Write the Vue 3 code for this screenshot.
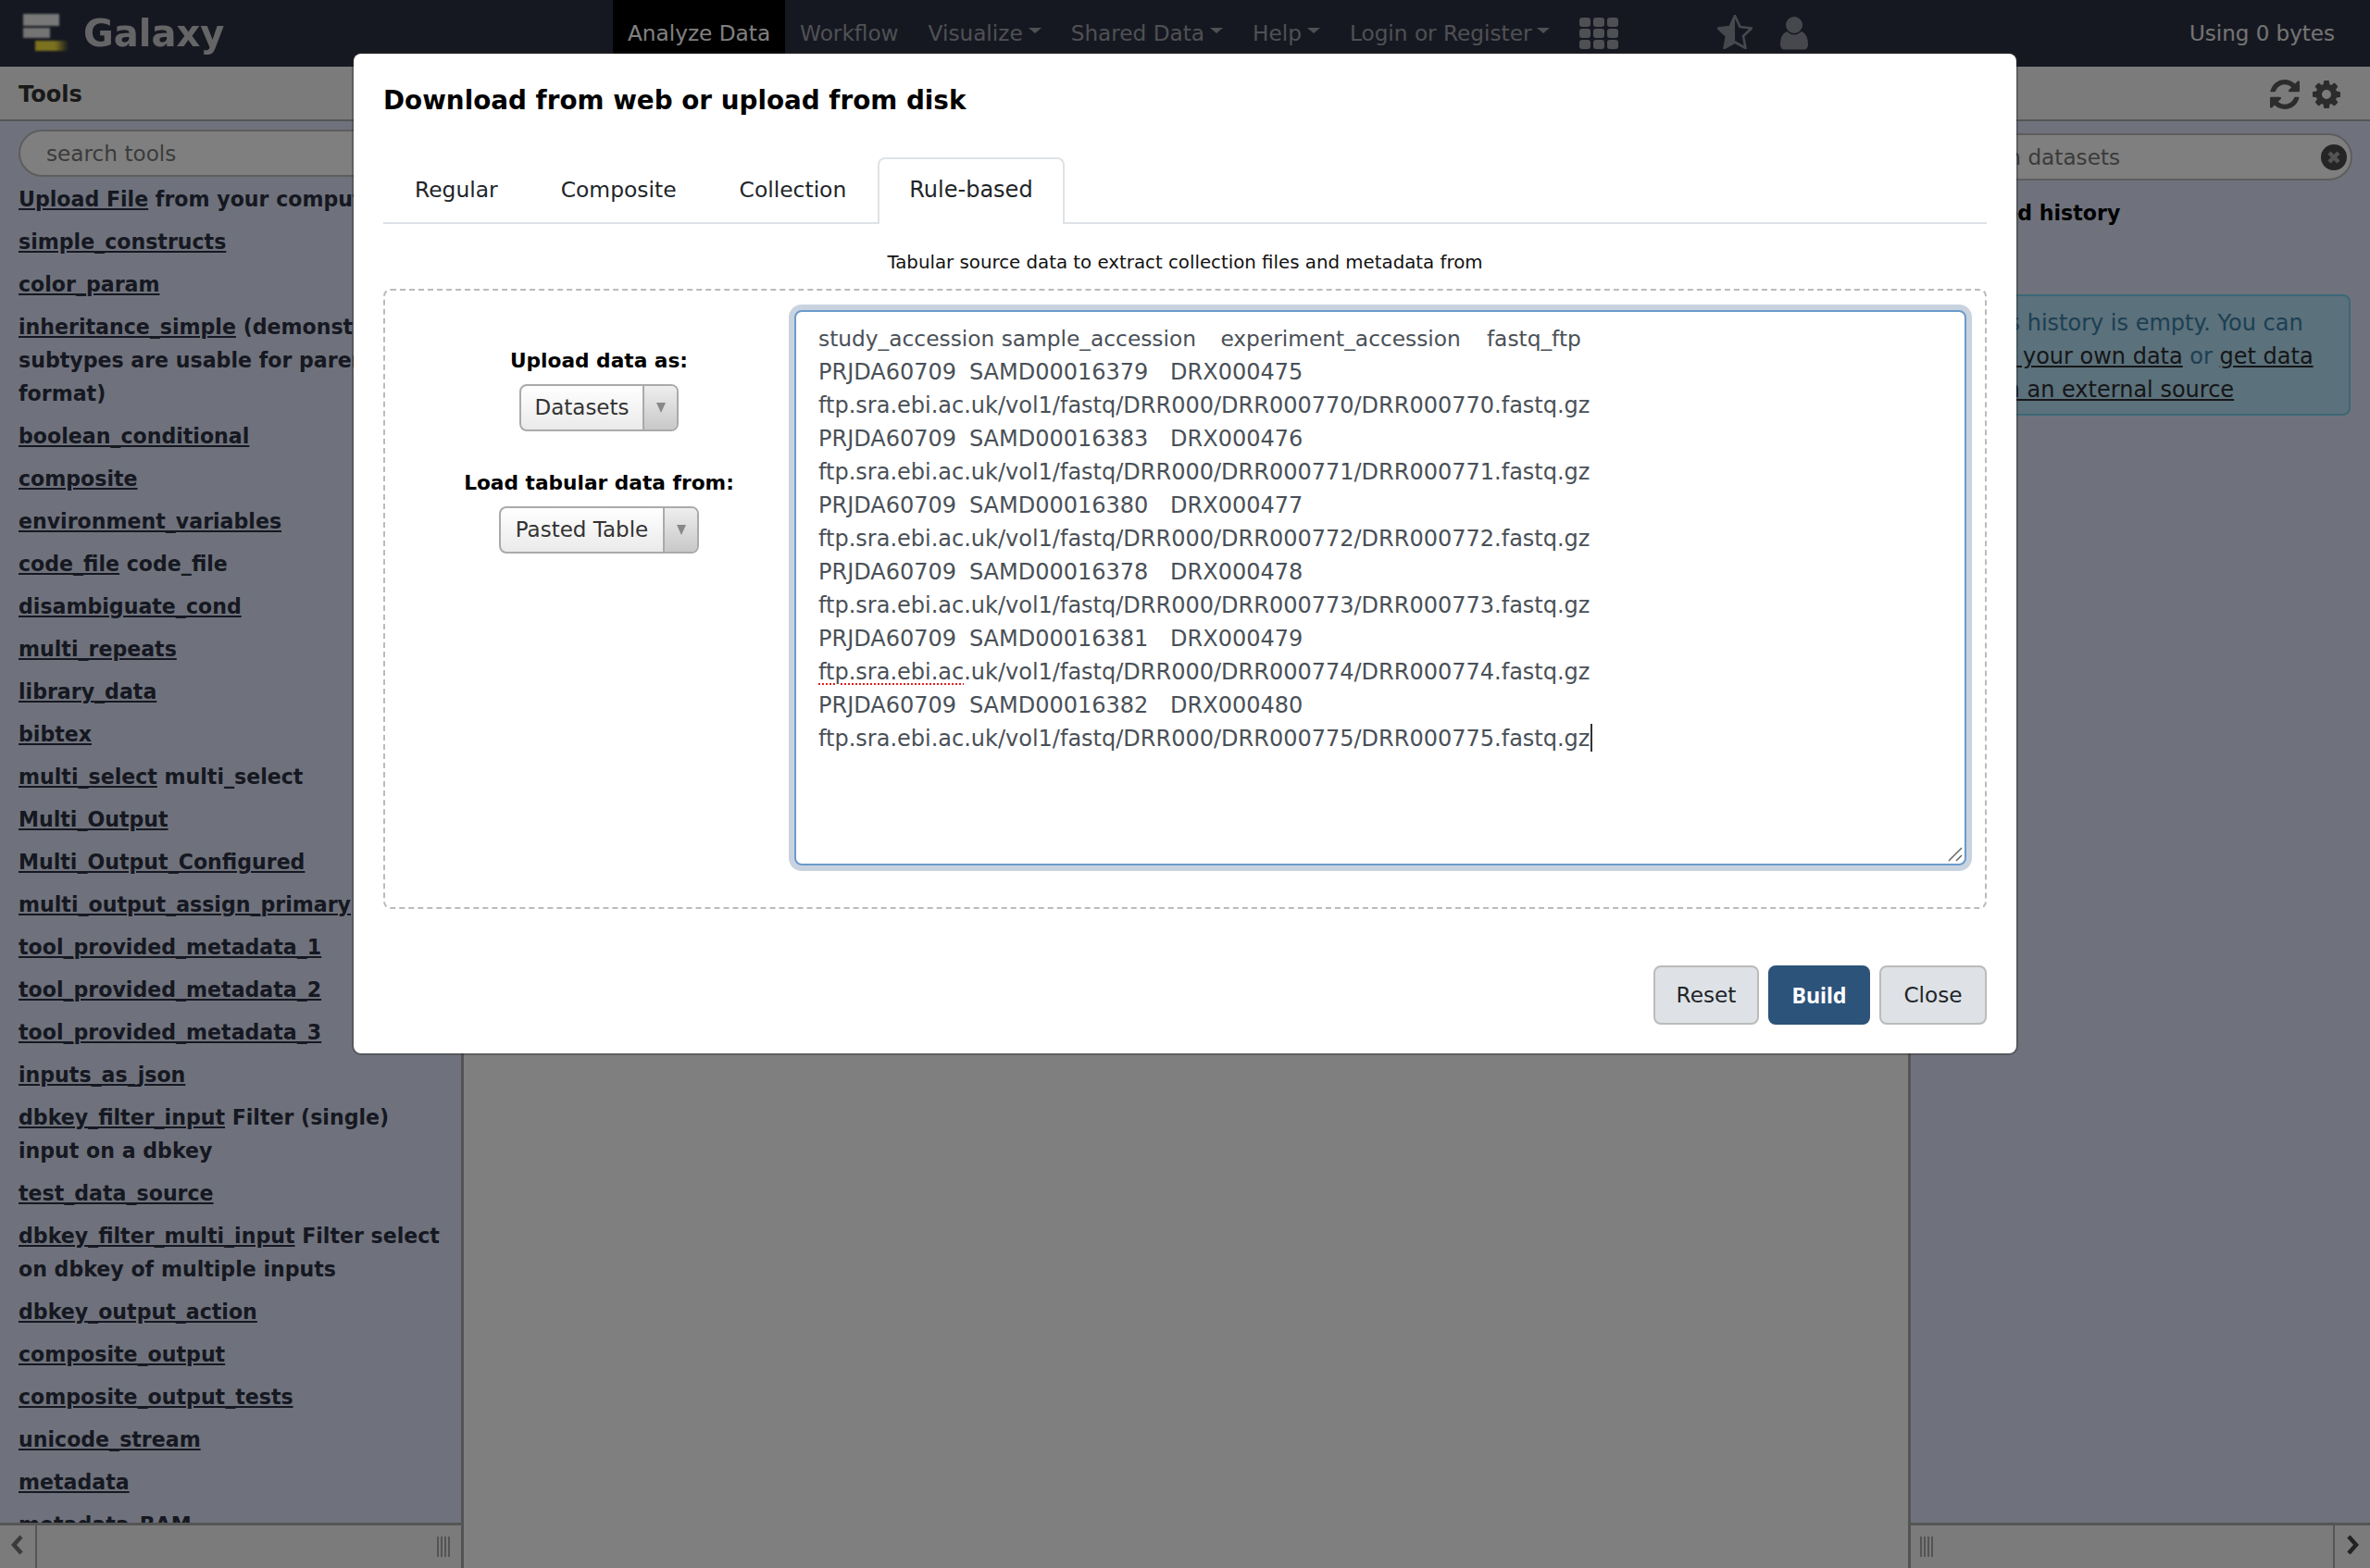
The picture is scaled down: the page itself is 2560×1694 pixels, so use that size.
<script setup>
const tools = [
  ['Upload File', ' from your computer'],
  ['simple_constructs', ''],
  ['color_param', ''],
  ['inheritance_simple', ' (demonstrate subtypes are usable for parent format)'],
  ['boolean_conditional', ''],
  ['composite', ''],
  ['environment_variables', ''],
  ['code_file', ' code_file'],
  ['disambiguate_cond', ''],
  ['multi_repeats', ''],
  ['library_data', ''],
  ['bibtex', ''],
  ['multi_select', ' multi_select'],
  ['Multi_Output', ''],
  ['Multi_Output_Configured', ''],
  ['multi_output_assign_primary', ''],
  ['tool_provided_metadata_1', ''],
  ['tool_provided_metadata_2', ''],
  ['tool_provided_metadata_3', ''],
  ['inputs_as_json', ''],
  ['dbkey_filter_input', ' Filter (single) input on a dbkey'],
  ['test_data_source', ''],
  ['dbkey_filter_multi_input', ' Filter select on dbkey of multiple inputs'],
  ['dbkey_output_action', ''],
  ['composite_output', ''],
  ['composite_output_tests', ''],
  ['unicode_stream', ''],
  ['metadata', ''],
  ['metadata_BAM', ''],
]

const rows = [
  ['PRJDA60709\tSAMD00016379\tDRX000475', '770'],
  ['PRJDA60709\tSAMD00016383\tDRX000476', '771'],
  ['PRJDA60709\tSAMD00016380\tDRX000477', '772'],
  ['PRJDA60709\tSAMD00016378\tDRX000478', '773'],
  ['PRJDA60709\tSAMD00016381\tDRX000479', '774'],
  ['PRJDA60709\tSAMD00016382\tDRX000480', '775'],
]
const header = 'study_accession sample_accession\texperiment_accession\t'
const navItems = [
  { label: 'Workflow', caret: false },
  { label: 'Visualize', caret: true },
  { label: 'Shared Data', caret: true },
  { label: 'Help', caret: true },
  { label: 'Login or Register', caret: true },
]
const tabs = ['Regular', 'Composite', 'Collection', 'Rule-based']
</script>

<template>
  <div class="page">
    <header class="navbar">
      <div class="brand">
        <div class="logo">
          <i class="b1"></i><i class="b2"></i><i class="b3"></i>
        </div>
        <span class="brand-text">Galaxy</span>
      </div>
      <nav class="nav">
        <a class="nav-item active">Analyze Data</a>
        <a v-for="n in navItems" :key="n.label" class="nav-item">
          {{ n.label }}<i v-if="n.caret" class="caret"></i>
        </a>
        <div class="grid-icon"><i v-for="k in 9" :key="k"></i></div>
        <svg class="star" viewBox="0 0 38 37" width="38" height="37">
          <path d="M19 1 L24.5 13 L37 14.5 L28 23 L30.5 36 L19 29.5 L7.5 36 L10 23 L1 14.5 L13.5 13 Z" fill="none" stroke="#8f919a" stroke-width="2.6" stroke-linejoin="round"/>
          <path d="M19 1 L13.5 13 L1 14.5 L10 23 L7.5 36 L19 29.5 Z" fill="#8f919a"/>
        </svg>
        <svg class="person" viewBox="0 0 30 36" width="30" height="36">
          <circle cx="15" cy="9" r="9" fill="#8f919a"/>
          <path d="M7 16 Q15 23 23 16 Q30 19 30 30 Q30 35.500 25 35.500 L5 35.500 Q0 35.500 0 30 Q0 19 7 16 Z" fill="#8f919a"/>
        </svg>
      </nav>
      <div class="quota">Using 0 bytes</div>
    </header>

    <div class="body">
      <aside class="side left">
        <div class="panel-head"><span class="panel-title">Tools</span></div>
        <div class="search tools-search">search tools</div>
        <div class="tool-list">
          <div v-for="t in tools" :key="t[0]" class="tool">
            <a>{{ t[0] }}</a>{{ t[1] }}
          </div>
        </div>
        <div class="panel-foot">
          <div class="chev-cell">
            <svg viewBox="0 0 14 24" width="14" height="24"><path d="M11 3 L3 12 L11 21" fill="none" stroke="#777" stroke-width="4.500"/></svg>
          </div>
          <div class="foot-space end"><span class="handle"></span></div>
        </div>
      </aside>

      <main class="center"></main>

      <aside class="side right">
        <div class="panel-head end">
          <svg class="hicon" viewBox="0 0 1536 1536" width="32" height="32"><path fill="#585858" d="M1511 928q0 5-1 7-64 268-268 434.5t-478 166.5q-146 0-282.5-55t-243.5-157l-129 129q-19 19-45 19t-45-19-19-45v-448q0-26 19-45t45-19h448q26 0 45 19t19 45-19 45l-137 137q71 66 161 102t187 36q134 0 250-65t186-179q11-17 53-117 8-23 30-23h192q13 0 22.5 9.500t9.500 22.500zm25-800v448q0 26-19 45t-45 19h-448q-26 0-45-19t-19-45 19-45l138-138q-148-137-349-137-134 0-250 65t-186 179q-11 17-53 117-8 23-30 23h-199q-13 0-22.500-9.500t-9.500-22.500v-7q65-268 270-434.500t480-166.500q146 0 284 55.500t245 156.500l130-129q19-19 45-19t45 19 19 45z"/></svg>
          <svg class="hicon" viewBox="0 0 1536 1536" width="30" height="30"><path fill="#585858" d="M1024 640q0-106-75-181t-181-75-181 75-75 181 75 181 181 75 181-75 75-181zm512-109v222q0 12-8 23t-20 13l-185 28q-19 54-39 91 35 50 107 138 10 12 10 25t-9 23q-27 37-99 108t-94 71q-12 0-26-9l-138-108q-44 23-91 38-16 136-29 186-7 28-36 28h-222q-14 0-24.500-8.500t-11.500-21.500l-28-184q-49-16-90-37l-141 107q-10 9-25 9-14 0-25-11-126-114-165-168-7-10-7-23 0-12 8-23 15-21 51-66.500t54-70.500q-27-50-41-99l-183-27q-13-2-21-12.500t-8-23.500v-222q0-12 8-23t19-13l186-28q14-46 39-92-40-57-107-138-10-12-10-24 0-10 9-23 26-36 98.500-107.500t94.500-71.500q13 0 26 10l138 107q44-23 91-38 16-136 29-186 7-28 36-28h222q14 0 24.500 8.500t11.500 21.500l28 184q49 16 90 37l142-107q9-9 24-9 13 0 25 10 129 119 165 170 7 8 7 22 0 12-8 23-15 21-51 66.500t-54 70.500q26 50 41 98l183 28q13 2 21 12.500t8 23.500z" transform="translate(0 128)"/></svg>
        </div>
        <div class="search hist-search">
          <span>search datasets</span>
          <svg viewBox="0 0 28 28" width="28" height="28"><circle cx="14" cy="14" r="14" fill="#4a4a4a"/><path d="M9 9 L19 19 M19 9 L9 19" stroke="#a8a8a8" stroke-width="4.500"/></svg>
        </div>
        <div class="hist-name">Unnamed history</div>
        <div class="message">
          <span class="msg-first">This history is empty. You can</span><br>
          <a>load your own data</a> or <a>get data</a><br>
          <a>from an external source</a>
        </div>
        <div class="spacer"></div>
        <div class="panel-foot">
          <div class="foot-space"><span class="handle"></span></div>
          <div class="chev-cell rightchev">
            <svg viewBox="0 0 14 24" width="14" height="24"><path d="M3 3 L11 12 L3 21" fill="none" stroke="#444" stroke-width="4.500"/></svg>
          </div>
        </div>
      </aside>
    </div>

    <div class="backdrop"></div>

    <section class="modal">
      <h4 class="modal-title">Download from web or upload from disk</h4>
      <div class="tabs">
        <a v-for="t in tabs" :key="t" class="tab" :class="{ on: t === 'Rule-based' }">{{ t }}</a>
      </div>
      <p class="hint">Tabular source data to extract collection files and metadata from</p>
      <div class="drop">
        <div class="opts">
          <label class="opt-label first">Upload data as:</label>
          <div class="select s1"><span class="sel-text">Datasets</span><span class="sel-arrow"><i></i></span></div>
          <label class="opt-label second">Load tabular data from:</label>
          <div class="select s2"><span class="sel-text">Pasted Table</span><span class="sel-arrow"><i></i></span></div>
        </div>
        <div class="area">
          <div class="line head">{{ header }}<span class="lastcol">fastq_ftp</span></div>
          <template v-for="r in rows" :key="r[1]">
            <div class="line">{{ r[0] }}</div>
            <div class="line"><span v-if="r[1] === '774'" class="spell">ftp.sra.ebi.ac</span><template v-else>ftp.sra.ebi.ac</template>.uk/vol1/fastq/DRR000/DRR000{{ r[1] }}/DRR000{{ r[1] }}.fastq.gz<i v-if="r[1] === '775'" class="cursor"></i></div>
          </template>
          <svg class="grip" viewBox="0 0 16 16" width="16" height="16"><path d="M1 15 L15 1 M9 15 L15 9" stroke="#666" stroke-width="1.500" fill="none"/></svg>
        </div>
      </div>
      <div class="actions">
        <button class="btn reset">Reset</button>
        <button class="btn primary">Build</button>
        <button class="btn close">Close</button>
      </div>
    </section>
  </div>
</template>

<style>
html, body { margin: 0; padding: 0; background: #fff; }
</style>

<style scoped>
.page {
  position: relative;
  width: 2560px;
  height: 1694px;
  overflow: hidden;
  display: flex;
  flex-direction: column;
  font-family: "DejaVu Sans", "Noto Sans", sans-serif;
  font-size: 24px;
  line-height: 36px;
  color: #2c3143;
}
.navbar {
  height: 72px;
  flex: none;
  background: #2c3143;
  display: flex;
  align-items: center;
  color: #fff;
}
.brand { width: 662px; display: flex; align-items: center; flex: none; }
.logo { position: relative; width: 90px; height: 72px; flex: none; }
.logo i { position: absolute; display: block; filter: blur(1px); }
.b1 { left: 25px; top: 15px; width: 39px; height: 13px; background: #f0f0f0; }
.b2 { left: 25px; top: 30px; width: 29px; height: 11px; background: #e8e8e8; }
.b3 { left: 38px; top: 44px; width: 36px; height: 11px; background: linear-gradient(90deg, #f7e23f, #f7e23f 60%, #2c3143); }
.brand-text { font-size: 40px; font-weight: 700; color: #fff; opacity: .75; }
.nav { display: flex; align-items: center; height: 72px; flex: 1; }
.nav-item {
  height: 72px;
  display: flex;
  align-items: center;
  padding: 0 16px;
  font-size: 23.200px;
  color: #9ea0a8;
  white-space: nowrap;
}
.nav-item.active { background: #000; color: #fff; }
.caret {
  display: inline-block;
  margin-left: 6px;
  margin-top: -6px;
  border-left: 7px solid transparent;
  border-right: 7px solid transparent;
  border-top: 6px solid #9ea0a8;
}
.grid-icon {
  display: grid;
  grid-template-columns: repeat(3, 12px);
  grid-auto-rows: 10px;
  gap: 2px 3px;
  margin-left: 16px;
}
.grid-icon i { background: #9ea0a8; border-radius: 3px; display: block; }
.star { margin-left: 107px; margin-bottom: 4px; }
.person { margin-left: 30px; margin-top: 0; }
.quota { margin-left: auto; padding-right: 38px; font-size: 23px; color: #e8e8e8; white-space: nowrap; }

.body { flex: 1; display: flex; min-height: 0; }
.side {
  flex: none;
  background: #dfe5f9;
  display: flex;
  flex-direction: column;
  min-height: 0;
}
.left { width: 501px; border-right: 3px solid #a8a8a8; box-sizing: border-box; }
.right { width: 499px; border-left: 3px solid #a8a8a8; box-sizing: border-box; }
.center { flex: 1; background: #fff; }
.panel-head {
  height: 55px;
  flex: none;
  box-sizing: content-box;
  background: #f6f6f6;
  border-bottom: 2px solid #aaa;
  display: flex;
  align-items: center;
  padding: 2px 20px 0;
  margin-bottom: -2px;
}
.panel-head.end { justify-content: flex-end; gap: 14px; padding-right: 32px; }
.panel-title { font-weight: 600; color: #333; font-size: 24px; }
.search {
  flex: none;
  height: 51px;
  box-sizing: border-box;
  background: #fff;
  border: 2px solid #bbb;
  border-radius: 26px;
  color: #777;
  font-size: 23.200px;
  display: flex;
  align-items: center;
  justify-content: space-between;
}
.tools-search { margin: 11px 20px 6px; padding-left: 28px; }
.hist-search { margin: 15px 19px 0 19px; padding: 0 4px 0 21px; }
.tool-list { flex: 1; min-height: 0; overflow: hidden; padding: 0 20px 0 20px; }
.tool { margin-bottom: 10px; font-weight: 700; font-size: 22.100px; color: #2c3143; }
.tool a { text-decoration: underline; }
.panel-foot {
  height: 49px;
  flex: none;
  box-sizing: border-box;
  background: #f6f6f6;
  border-top: 3px solid #aaa;
  display: flex;
}
.chev-cell {
  width: 40px;
  flex: none;
  display: flex;
  justify-content: center;
  padding-top: 9px;
  box-sizing: border-box;
  border-right: 2px solid #aaa;
}
.chev-cell.rightchev { border-right: 0; border-left: 2px solid #aaa; }
.foot-space { flex: 1; display: flex; align-items: center; padding: 0 10px; }
.foot-space.end { justify-content: flex-end; }
.handle {
  display: block;
  width: 16px;
  height: 22px;
  background: repeating-linear-gradient(90deg, #a8a8a8 0 2px, transparent 2px 4px);
}
.hist-name { font-weight: 700; font-size: 22.100px; color: #000; margin: 17px 13px 0; }
.message {
  margin: 70px 21px 0 19px;
  height: 131px;
  box-sizing: border-box;
  padding: 11px 41px;
  background: #b6e2f6;
  border: 2px solid #78d0ee;
  border-radius: 8px;
  color: #3a7ea6;
  white-space: nowrap;
}
.msg-first { margin-left: 7px; }
.message a { color: #2c2c30; text-decoration: underline; }
.spacer { flex: 1; }
.backdrop { position: absolute; inset: 0; background: rgba(0, 0, 0, .5); }

.modal {
  position: absolute;
  left: 382px;
  top: 58px;
  width: 1796px;
  height: 1080px;
  box-sizing: border-box;
  background: #fff;
  border-radius: 8px;
  box-shadow: 0 0 0 2px rgba(40, 40, 40, .35);
  padding: 0 32px;
  color: #000;
}
.modal-title { margin: 0; padding-top: 33px; font-size: 27.800px; line-height: 36px; font-weight: 700; height: 79px; }
.tabs {
  display: flex;
  height: 70px;
  margin-top: 0;
  border-bottom: 2px solid #dee2e6;
  box-sizing: content-box;
}
.tab {
  padding: 0 32px 2px;
  height: 70px;
  box-sizing: border-box;
  display: flex;
  align-items: center;
  border: 2px solid transparent;
  border-bottom: 0;
  border-radius: 8px 8px 0 0;
  color: #212529;
  font-size: 23.400px;
  white-space: nowrap;
}
.tab.on { border-color: #dee2e6; background: #fff; height: 72px; position: relative; font-size: 24px; padding-bottom: 4px; }
.hint { margin: 0; height: 70px; line-height: 34px; padding-top: 25px; box-sizing: border-box; text-align: center; font-size: 19.800px; color: #111; }
.drop {
  display: flex;
  width: 1732px;
  height: 670px;
  box-sizing: border-box;
  border: 2px dashed #bbb;
  border-radius: 8px;
  margin-left: 0;
  padding: 21px 20px 0 0;
}
.opts { width: 442px; flex: none; display: flex; flex-direction: column; align-items: center; box-sizing: border-box; padding-left: 20px; }
.opt-label { font-weight: 700; font-size: 21.700px; color: #000; white-space: nowrap; }
.opt-label.first { margin-top: 37px; }
.opt-label.second { margin-top: 38px; }
.select {
  margin-top: 7px;
  height: 51px;
  box-sizing: border-box;
  border: 2px solid #aaa;
  border-radius: 8px;
  background: linear-gradient(#fff, #eaeaea);
  display: flex;
  align-items: stretch;
  color: #333;
  font-size: 23px;
}
.s1 { width: 172px; }
.s2 { width: 216px; }
.sel-text { flex: 1; text-align: center; line-height: 47px; white-space: nowrap; }
.sel-arrow {
  width: 35px;
  flex: none;
  border-left: 2px solid #aaa;
  background: linear-gradient(#eee, #c8c8c8);
  display: flex;
  align-items: center;
  justify-content: center;
  border-radius: 0 6px 6px 0;
}
.sel-arrow i { border-left: 5px solid transparent; border-right: 5px solid transparent; border-top: 11px solid #888; }
.area {
  position: relative;
  flex: 1;
  height: 600px;
  box-sizing: border-box;
  background: #fff;
  border: 2px solid #6a9bcb;
  border-radius: 8px;
  box-shadow: 0 0 0 6px #c9d3e0;
  padding: 11px 14px 0 24px;
  color: #495057;
}
.line { white-space: pre; tab-size: 54.300px; height: 36px; }
.line.head { font-size: 23.300px; }
.lastcol { margin-left: 16px; }
.spell { text-decoration: underline dotted #e02020 2px; text-underline-offset: 4px; }
.cursor { display: inline-block; width: 2px; height: 30px; background: #333; vertical-align: -6px; margin-left: 1px; }
.grip { position: absolute; right: 2px; bottom: 2px; }
.actions { display: flex; justify-content: flex-end; gap: 10px; margin-top: 61px; }
.btn {
  font: inherit;
  font-size: 23.200px;
  height: 64px;
  padding: 0;
  border: 2px solid #bbb;
  border-radius: 8px;
  background: #dee2e6;
  color: #212529;
}
.btn.reset { width: 114px; }
.btn.close { width: 116px; }
.btn.primary { width: 110px; background: #2c5379; border-color: #2c5379; color: #fff; font-family: "Noto Sans", sans-serif; font-weight: 700; }
</style>
